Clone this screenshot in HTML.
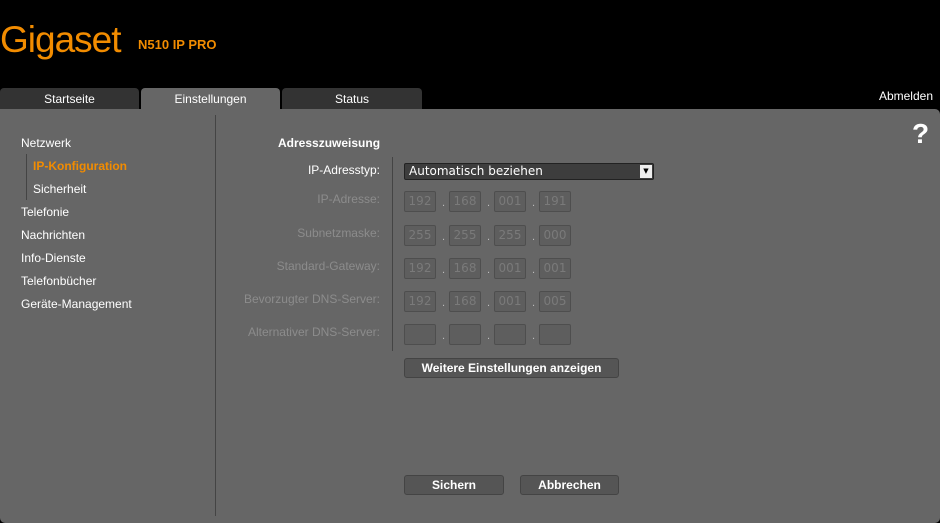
<!DOCTYPE html>
<html><head><meta charset="utf-8"><style>
*{margin:0;padding:0;box-sizing:border-box}
body{width:940px;height:523px;background:#000;position:relative;overflow:hidden;font-family:"Liberation Sans",sans-serif;font-size:12px;color:#fff}
.a{position:absolute}
.logo{left:0;top:20px;font-size:37px;color:#f28c00;letter-spacing:-1px;font-family:"Liberation Sans",sans-serif;line-height:40px}
.model{left:138px;top:37px;font-size:13px;font-weight:bold;color:#f28c00}
.tab{top:88px;height:21px;background:#333;border-radius:4px 4px 0 0;text-align:center;line-height:23px;font-size:12px;color:#fff}
.panel{left:0;top:109px;width:940px;height:414px;background:#666;border-radius:0 5px 5px 5px}
.nav{left:21px;font-size:12px;color:#fff}
.lbl{right:560px;font-size:12px;color:#8c8c8c;text-align:right}
.box{width:32px;height:21px;background:#5e5e5e;border:1px solid #4e4e4e;border-radius:2px;color:#7a7a7a;font-family:"DejaVu Sans",sans-serif;font-size:12px;text-align:center;line-height:19px}
.dot{font-size:11px;color:#bbb}
.btn{height:20px;background:#555;border:1px solid #444;border-radius:3px;font-weight:bold;font-size:12px;text-align:center;line-height:18px;color:#fff}
</style></head><body>
<div class="a logo">Gigaset</div>
<div class="a model">N510 IP PRO</div>
<div class="a tab" style="left:0;width:139px">Startseite</div>
<div class="a tab" style="left:141px;width:139px;background:#666">Einstellungen</div>
<div class="a tab" style="left:282px;width:140px">Status</div>
<div class="a" style="right:7px;top:89px;font-size:12px">Abmelden</div>
<div class="a panel"></div>
<div class="a" style="left:215px;top:115px;width:1px;height:401px;background:#444"></div>
<div class="a" style="left:392px;top:157px;width:1px;height:194px;background:#444"></div>
<div class="a" style="left:26px;top:154px;width:1px;height:46px;background:#444"></div>
<div class="a" style="left:912px;top:118px;font-size:28px;font-weight:bold;color:#fff;line-height:32px">?</div>
<div class="a nav" style="top:136px">Netzwerk</div>
<div class="a nav" style="left:33px;top:159px;color:#f28c00;font-weight:bold">IP-Konfiguration</div>
<div class="a nav" style="left:33px;top:182px">Sicherheit</div>
<div class="a nav" style="top:205px">Telefonie</div>
<div class="a nav" style="top:228px">Nachrichten</div>
<div class="a nav" style="top:251px">Info-Dienste</div>
<div class="a nav" style="top:274px">Telefonbücher</div>
<div class="a nav" style="top:297px">Geräte-Management</div>
<div class="a" style="left:278px;top:136px;font-weight:bold">Adresszuweisung</div>
<div class="a lbl" style="top:163px;color:#fff">IP-Adresstyp:</div>
<div class="a" style="left:404px;top:163px;width:250px;height:17px;background:#3d3d3d;border:1px solid #222;border-radius:2px;font-family:'DejaVu Sans',sans-serif;font-size:12px;line-height:15px;padding-left:4px">Automatisch beziehen<div class="a" style="right:1px;top:1px;width:12px;height:13px;background:#eee;color:#000;font-size:7px;line-height:13px;text-align:center">▼</div></div>
<div class="a lbl" style="top:192px">IP-Adresse:</div>
<div class="a lbl" style="top:226px">Subnetzmaske:</div>
<div class="a lbl" style="top:259px">Standard-Gateway:</div>
<div class="a lbl" style="top:292px">Bevorzugter DNS-Server:</div>
<div class="a lbl" style="top:325px">Alternativer DNS-Server:</div>
<div id="rows"></div>
<div class="a btn" style="left:404px;top:358px;width:215px">Weitere Einstellungen anzeigen</div>
<div class="a btn" style="left:404px;top:475px;width:100px">Sichern</div>
<div class="a btn" style="left:520px;top:475px;width:99px">Abbrechen</div>
<script>
var d=[["192","168","001","191"],["255","255","255","000"],["192","168","001","001"],["192","168","001","005"],["","","",""]],t=[191,225,258,291,324],h="";
d.forEach(function(r,i){r.forEach(function(v,j){var x=404+j*45;h+='<div class="a box" style="left:'+x+'px;top:'+t[i]+'px">'+v+'</div>';if(j<3)h+='<div class="a dot" style="left:'+(x+38)+'px;top:'+(t[i]+6)+'px">.</div>';});});
document.getElementById("rows").innerHTML=h;
</script>
</body></html>
